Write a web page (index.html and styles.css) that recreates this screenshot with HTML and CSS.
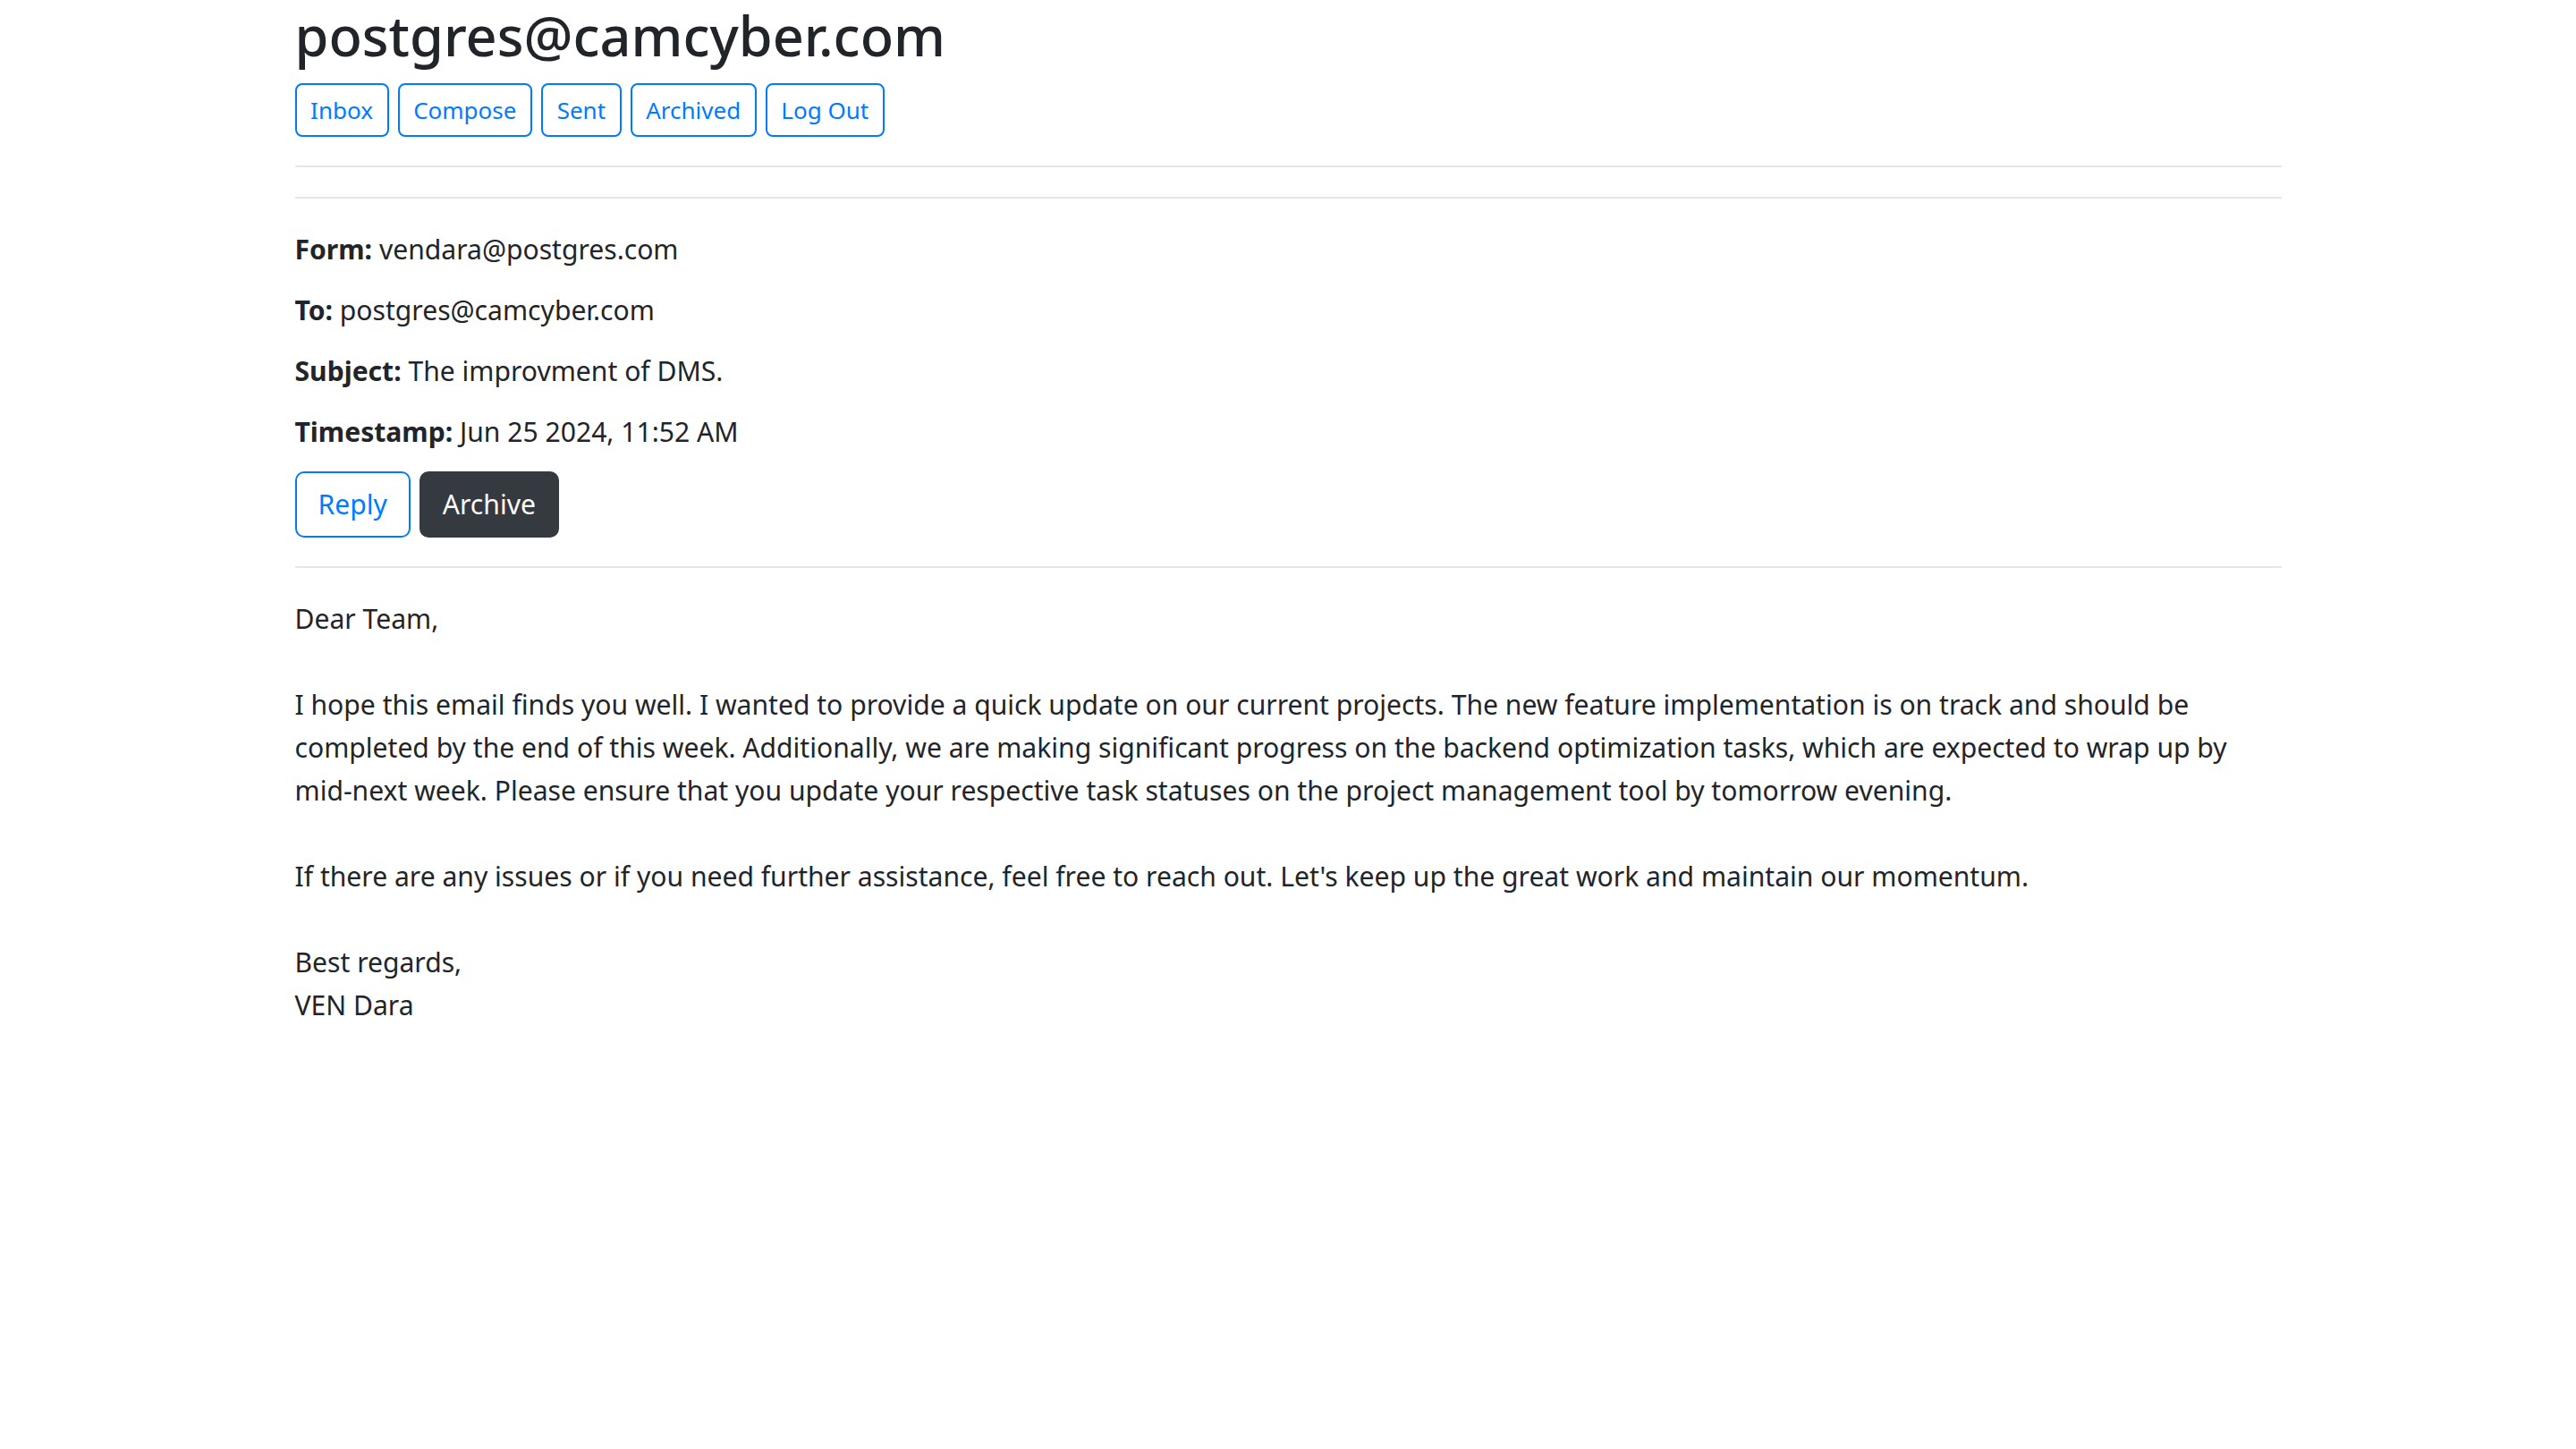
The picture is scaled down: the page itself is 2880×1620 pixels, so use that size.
FILE: index.html
```html
<!DOCTYPE html>
<html lang="en">
<head>
<meta charset="utf-8">
<title>postgres@camcyber.com</title>
<link rel="stylesheet" href="styles.css">
</head>
<body>
<div class="container">
  <h2 class="title">postgres@camcyber.com</h2>
  <nav class="nav">
    <a class="btn btn-sm btn-outline" href="#">Inbox</a>
    <a class="btn btn-sm btn-outline" href="#">Compose</a>
    <a class="btn btn-sm btn-outline" href="#">Sent</a>
    <a class="btn btn-sm btn-outline" href="#">Archived</a>
    <a class="btn btn-sm btn-outline" href="#">Log Out</a>
  </nav>
  <hr class="rule">
  <hr class="rule">
  <div class="meta">
    <p class="meta-row"><strong>Form:</strong> vendara@postgres.com</p>
    <p class="meta-row"><strong>To:</strong> postgres@camcyber.com</p>
    <p class="meta-row"><strong>Subject:</strong> The improvment of DMS.</p>
    <p class="meta-row"><strong>Timestamp:</strong> Jun 25 2024, 11:52 AM</p>
  </div>
  <div class="actions">
    <button class="btn btn-lg btn-outline">Reply</button>
    <button class="btn btn-lg btn-dark">Archive</button>
  </div>
  <hr class="rule">
  <div class="body-text">Dear Team,

I hope this email finds you well. I wanted to provide a quick update on our current projects. The new feature implementation is on track and should be completed by the end of this week. Additionally, we are making significant progress on the backend optimization tasks, which are expected to wrap up by mid-next week. Please ensure that you update your respective task statuses on the project management tool by tomorrow evening.

If there are any issues or if you need further assistance, feel free to reach out. Let's keep up the great work and maintain our momentum.

Best regards,
VEN Dara</div>
</div>
</body>
</html>
```
FILE: styles.css
```css
* { box-sizing: border-box; }

body {
  margin: 0;
  background: #ffffff;
  color: #212529;
  font-family: "Noto Sans", "Open Sans", sans-serif;
  font-size: 30.1px;
  line-height: 48px;
}

.container {
  width: 2221px;
  margin: 0 auto;
}

.title {
  margin: 0 0 14px;
  font-size: 61.2px;
  font-weight: 500;
  line-height: 79px;
  color: #212529;
}

.nav {
  display: flex;
  gap: 10px;
}

.btn {
  display: inline-block;
  font-family: inherit;
  text-decoration: none;
  border: 2px solid transparent;
  background: transparent;
  cursor: pointer;
}

.btn-sm {
  font-size: 26px;
  line-height: 42px;
  padding: 7px 15.6px;
  border-radius: 8px;
}

.btn-lg {
  font-size: 30.1px;
  line-height: 46px;
  padding: 12px 24px;
  border-radius: 10px;
}

.btn-outline {
  color: #007bff;
  border-color: #007bff;
  background: #ffffff;
}

.btn-dark {
  color: #ffffff;
  background: #343a40;
  border-color: #343a40;
}

.rule {
  margin: 32px 0 33px;
  border: 0;
  border-top: 2px solid #e6e6e6;
  height: 0;
}

.meta {
  display: flex;
  flex-direction: column;
}

.meta-row {
  margin: 0 0 20px;
}

.meta-row strong {
  font-weight: 700;
}

.actions {
  display: flex;
  gap: 10px;
}

.body-text {
  white-space: pre-wrap;
  margin-top: 33px;
}
```
